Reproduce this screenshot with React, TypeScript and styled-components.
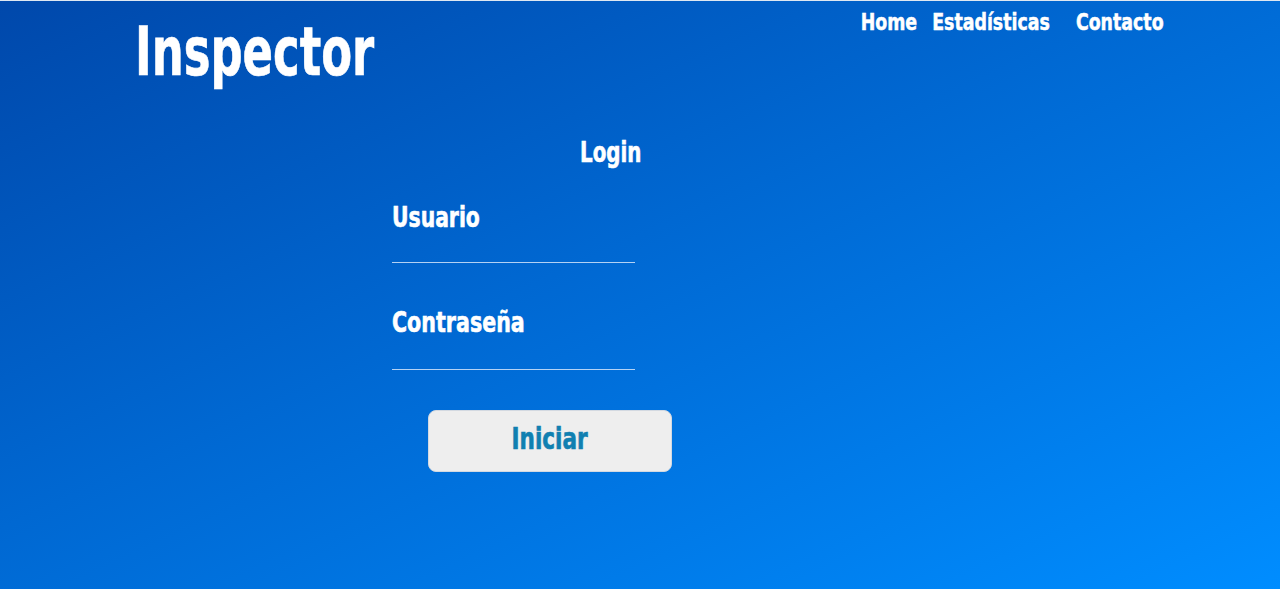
import React from "react";
import styled, { createGlobalStyle } from "styled-components";

const Global = createGlobalStyle`
  html, body { margin: 0; padding: 0; }
  body { font-family: Impact, "DejaVu Sans Condensed", "DejaVu Sans", sans-serif; }
`;

const FONT = `Impact, "DejaVu Sans Condensed", "DejaVu Sans", sans-serif`;

const Page = styled.div`
  width: 1280px;
  height: 589px;
  box-sizing: border-box;
  border-top: 1px solid #dfe8f2;
  background: linear-gradient(to bottom right, #0048ab 0%, #0068d2 45%, #008dff 100%);
  color: #ffffff;
  overflow: hidden;
  display: flex;
  flex-direction: column;
`;

const Header = styled.header`
  height: 99px;
  display: flex;
  justify-content: space-between;
  align-items: flex-start;
  padding: 0 116px 0 135px;
`;

/* Condensed heavy text: the glyphs are narrowed to the Impact-like proportions */
const Squeeze = styled.span<{ $sx: number; $sy?: number; $origin?: string }>`
  display: inline-block;
  white-space: nowrap;
  transform: scale(${(p) => p.$sx}, ${(p) => p.$sy ?? 1});
  transform-origin: ${(p) => p.$origin ?? "left top"};
  -webkit-text-stroke: 0.6px currentColor;
`;

const Title = styled.h1`
  margin: 17px 0 0;
  font-family: ${FONT};
  font-weight: 700;
  font-size: 64px;
  line-height: 1;
`;

const Nav = styled.nav`
  display: flex;
  margin-top: 10px;
  transform: scaleX(0.84);
  transform-origin: right top;
`;

const NavLink = styled.a<{ $gap?: number }>`
  font-family: ${FONT};
  font-weight: 700;
  font-size: 23px;
  line-height: 1;
  color: #ffffff;
  text-decoration: none;
  -webkit-text-stroke: 0.5px #ffffff;
  margin-left: ${(p) => p.$gap ?? 0}px;
`;

const Main = styled.main`
  display: flex;
  flex-direction: column;
  align-items: flex-start;
  padding-left: 392px;
`;

const FormTitle = styled.h2`
  margin: 38px 0 0 188px;
  font-family: ${FONT};
  font-weight: 700;
  font-size: 29px;
  line-height: 1;
`;

const Field = styled.div<{ $top: number }>`
  display: flex;
  flex-direction: column;
  margin-top: ${(p) => p.$top}px;
`;

const Label = styled.label`
  font-family: ${FONT};
  font-weight: 700;
  font-size: 29px;
  line-height: 1;
`;

const Input = styled.input<{ $h: number }>`
  box-sizing: content-box;
  width: 243px;
  height: ${(p) => p.$h}px;
  margin-top: 10px;
  padding: 0;
  border: none;
  border-bottom: 1px solid rgba(225, 236, 252, 0.8);
  background: transparent;
  outline: none;
  color: #fff;
`;

const Button = styled.button`
  box-sizing: border-box;
  margin: 40px 0 0 36px;
  width: 244px;
  height: 62px;
  padding: 0 0 5px;
  display: flex;
  align-items: center;
  justify-content: center;
  border: 1px solid #d3d9e1;
  border-radius: 8px;
  background: #eeeeee;
  color: #1080b1;
  font-family: ${FONT};
  font-weight: 700;
  font-size: 30px;
  line-height: 1;
  cursor: pointer;
`;

export default function App() {
  return (
    <>
      <Global />
      <Page>
        <Header>
          <Title>
            <Squeeze $sx={0.78} $sy={1.05}>Inspector</Squeeze>
          </Title>
          <Nav>
            <NavLink href="#">Home</NavLink>
            <NavLink href="#" $gap={18}>Estadísticas</NavLink>
            <NavLink href="#" $gap={31}>Contacto</NavLink>
          </Nav>
        </Header>
        <Main>
          <FormTitle>
            <Squeeze $sx={0.76}>Login</Squeeze>
          </FormTitle>
          <Field $top={36}>
            <Label>
              <Squeeze $sx={0.78}>Usuario</Squeeze>
            </Label>
            <Input type="text" $h={20} />
          </Field>
          <Field $top={45}>
            <Label>
              <Squeeze $sx={0.79}>Contraseña</Squeeze>
            </Label>
            <Input type="password" $h={22} />
          </Field>
          <Button>
            <Squeeze $sx={0.8} $origin="center">Iniciar</Squeeze>
          </Button>
        </Main>
      </Page>
    </>
  );
}
